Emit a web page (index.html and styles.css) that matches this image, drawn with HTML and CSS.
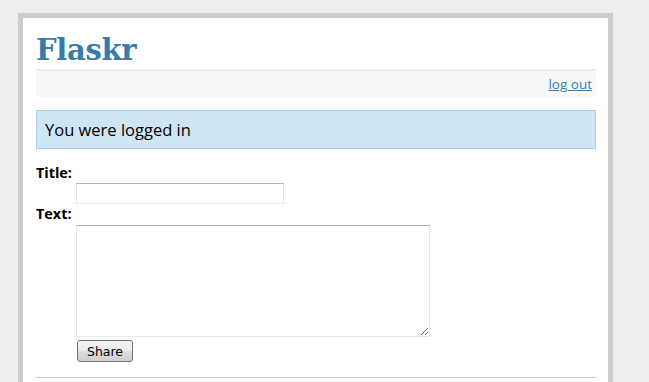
FILE: index.html
```html
<!DOCTYPE html>
<html lang="en">

<head>
  <meta charset="UTF-8" />
  <title>Flaskr</title>
  <link rel="stylesheet" href="styles.css">
</head>

<body>
  <div class="page">
    <h1>Flaskr</h1>
    <div class="metanav">
      <a href="#">log out</a>
    </div>

    <div class="flash">You were logged in</div>

    <form class="add-entry" action="#" method="post">
      <dl>
        <dt>Title:</dt>
        <dd><input type="text" name="title" class="title-field"></dd>
        <dt>Text:</dt>
        <dd><textarea name="text" rows="5" cols="40"></textarea></dd>
        <dd class="actions"><input type="submit" value="Share"></dd>
      </dl>
    </form>
  </div>
</body>

</html>
```

FILE: styles.css
```css
* {
  box-sizing: border-box;
}

body {
  margin: 0;
  font-family: 'Open Sans', 'Noto Sans', sans-serif;
  background: #eee;
  color: #000;
}

a,
h1 {
  color: #377ba8;
}

.page {
  margin: 13px 0 0 18px;
  width: 595px;
  min-height: 400px;
  border: 5px solid #ccc;
  padding: 13px 12px 12px 13px;
  background: white;
}

h1 {
  font-family: 'DejaVu Serif', Georgia, serif;
  font-size: 29px;
  line-height: 38px;
  letter-spacing: -0.3px;
  margin: 0;
  border-bottom: 2px solid #eee;
}

.metanav {
  text-align: right;
  font-size: 13.5px;
  line-height: 18px;
  padding: 4px 4px;
  margin-bottom: 13px;
  background: #f8f8f8;
}

.flash {
  background: #cee5f5;
  padding: 8px;
  border: 1px solid #aacbe2;
  font-size: 16.5px;
  line-height: 21px;
}

.add-entry {
  font-size: 14.4px;
  border-bottom: 1px solid #ccc;
}

.add-entry dl {
  font-weight: bold;
  margin: 14px 0 15px;
}

.add-entry dt {
  line-height: 20px;
}

.add-entry dd {
  margin: 0 0 0 40px;
}

.title-field,
textarea {
  display: block;
  border: 1px solid #e3e9ef;
  border-top-color: #abadb3;
  border-radius: 0;
  background: #fff;
  padding: 2px;
}

.title-field {
  width: 208px;
  height: 21px;
}

textarea {
  width: 354px;
  height: 112px;
  margin-top: 1px;
  font-family: 'Liberation Mono', monospace;
}

.actions {
  padding-top: 3px;
}

input[type="submit"] {
  display: block;
  width: 56px;
  height: 22px;
  margin-left: 1px;
  padding: 0;
  font-family: 'DejaVu Sans', sans-serif;
  font-size: 12.5px;
  color: #000;
  border: 1px solid #707070;
  border-radius: 3px;
  background: linear-gradient(#f2f2f2 0%, #ebebeb 50%, #dddddd 51%, #cfcfcf 100%);
}
```
